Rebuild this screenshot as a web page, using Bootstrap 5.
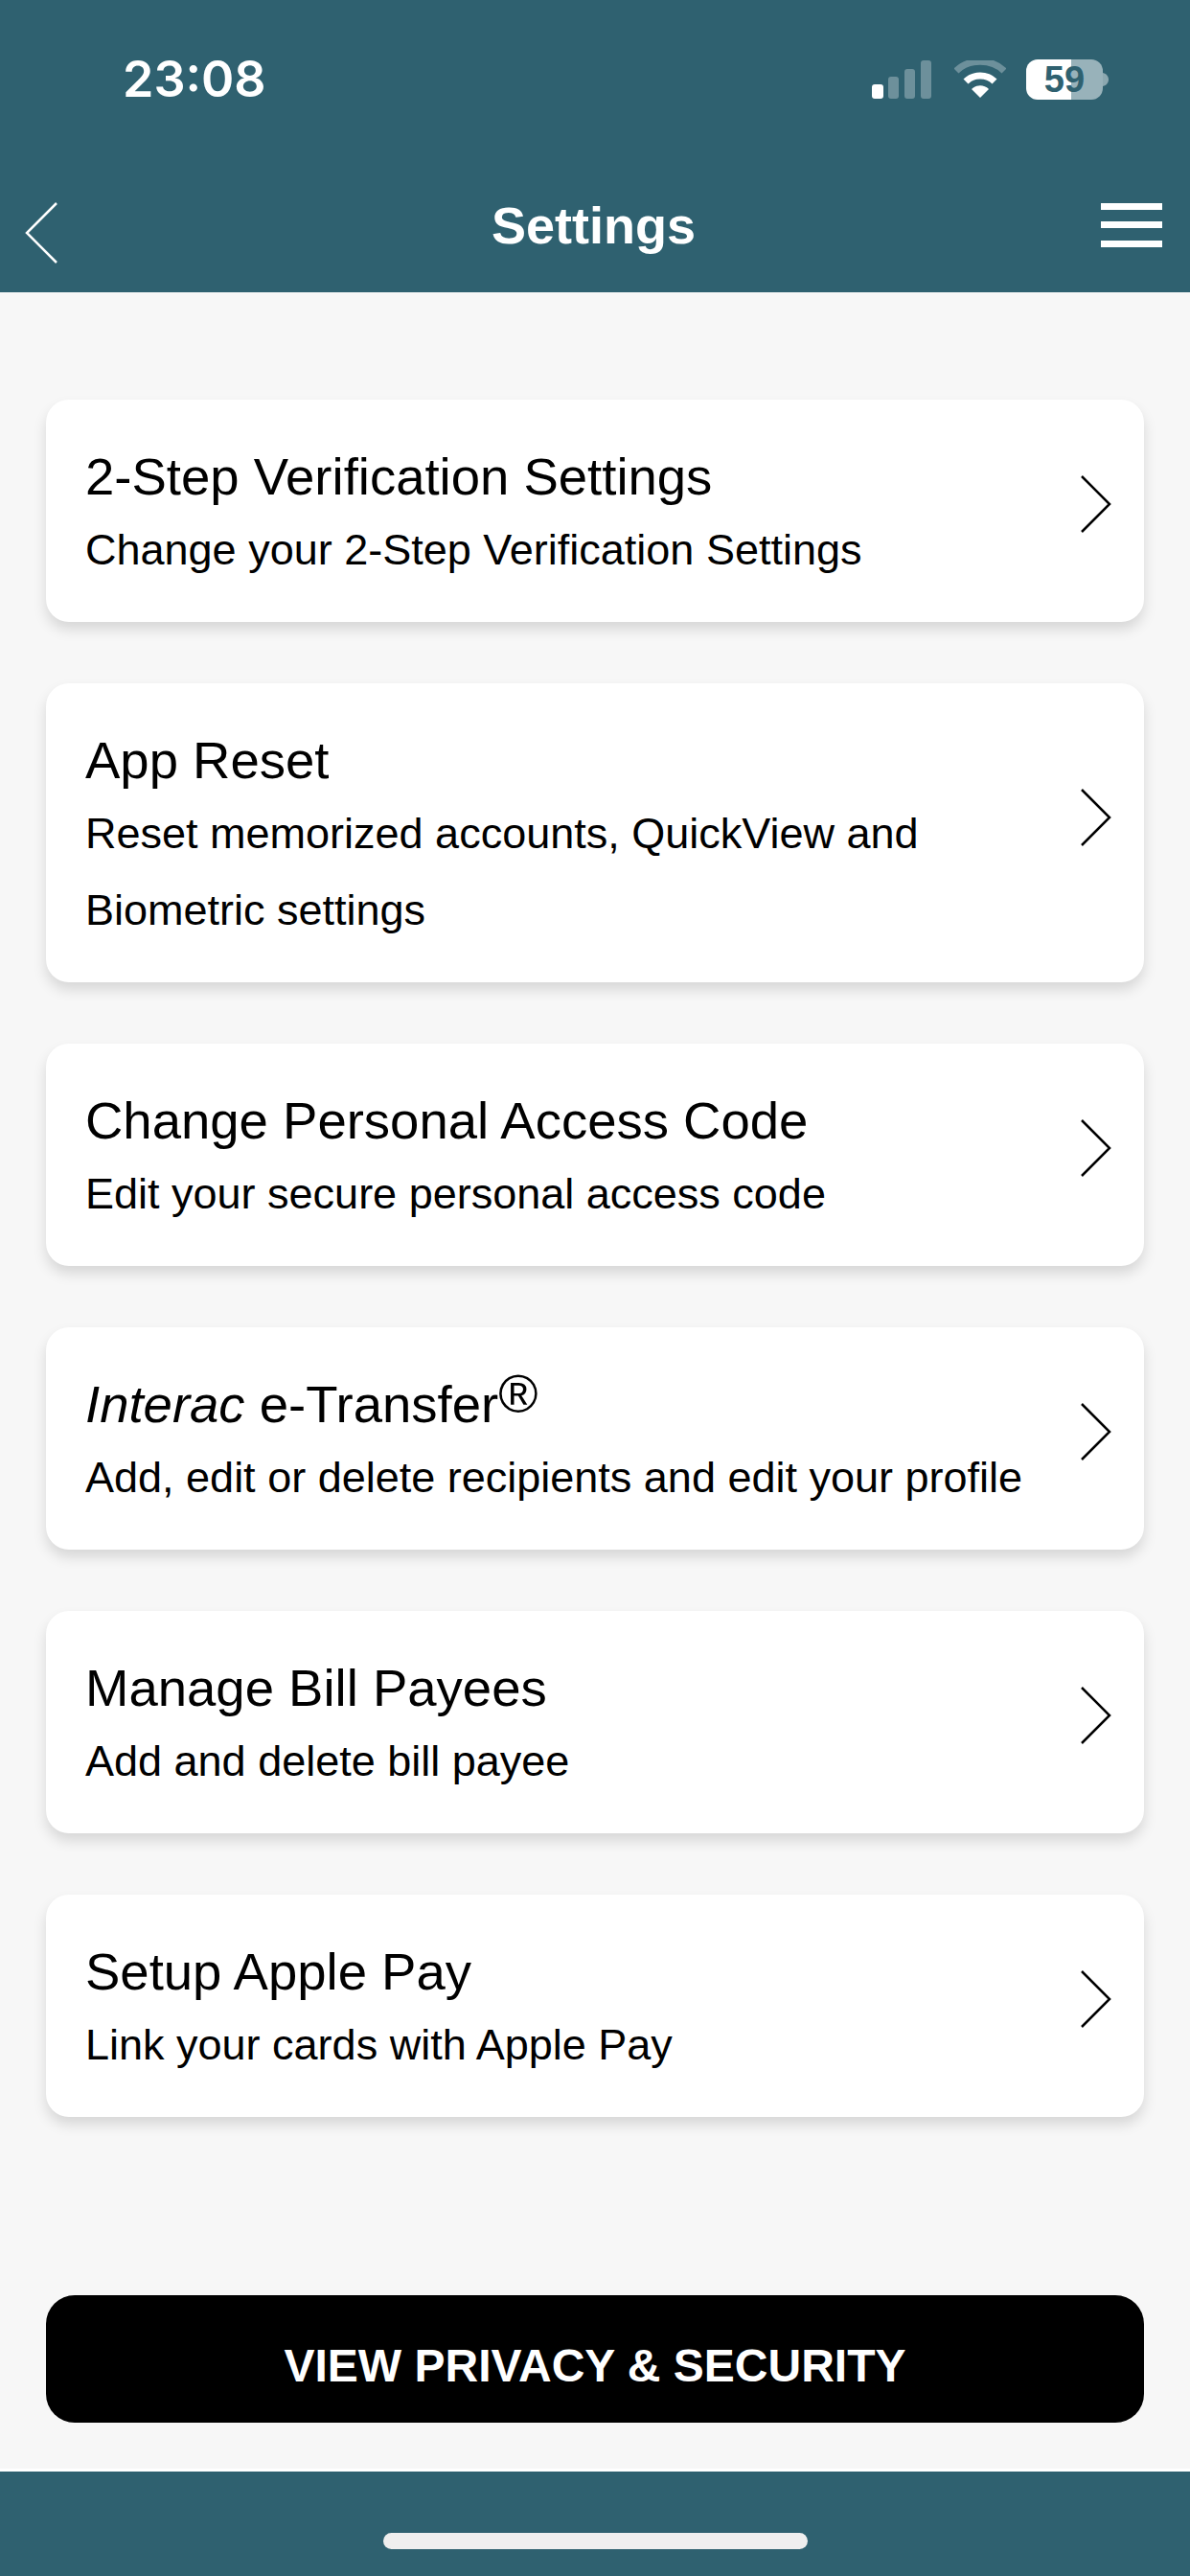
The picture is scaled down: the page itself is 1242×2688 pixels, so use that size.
<!DOCTYPE html>
<html lang="en">
<head>
    <meta charset="UTF-8">
    <title>Settings</title>
    <link href="https://cdn.jsdelivr.net/npm/bootstrap@5.3.3/dist/css/bootstrap.min.css" rel="stylesheet">
    <style>
        body { width: 1242px; height: 2688px; background: #f7f7f7; font-family: "Liberation Sans", Arial, sans-serif; color: #000; }
        .app-bar { height: 305px; background: #2f6170; color: #fff; }
        .status-row { height: 166px; padding: 0 84px 0 128px; }
        .clock { font-family: "Inter", "Liberation Sans", sans-serif; font-size: 52px; font-weight: 600; line-height: 1; }
        .signal-icon { margin-right: 24px; }
        .wifi-icon { margin-right: 21px; }
        .battery { width: 80px; height: 42px; border-radius: 12px; background: linear-gradient(90deg, #fff 0 47px, #98b2ba 47px); color: #2f6170; font-size: 38px; font-weight: 700; line-height: 42px; }
        .title-row { height: 139px; padding: 0 29px 0 26px; }
        .side-slot { flex: 1 1 0; }
        .back-icon { margin-top: 14px; display: block; }
        .page-title { font-size: 54px; font-weight: 700; margin: 0; }
        .menu-bars { width: 64px; margin-top: -2px; }
        .menu-bars span { display: block; height: 7px; background: #fff; margin-bottom: 12.5px; }
        .menu-bars span:last-child { margin-bottom: 0; }
        .settings-list { padding: 112px 48px 0; gap: 64px; }
        .setting-card { border: 0; border-radius: 24px; background: #fff; box-shadow: 0 8px 14px rgba(0,0,0,.13); padding: 53px 34px 35px 41px; }
        .setting-name { font-size: 54.5px; line-height: 56px; margin-bottom: 8px; font-weight: 400; }
        .setting-name sup { font-size: 56px; line-height: 0; top: -10px; vertical-align: baseline; }
        .setting-desc { font-size: 45px; line-height: 80px; margin: 0; }
        .arrow-wrap { margin-bottom: 32px; }
        .arrow-wrap.tall { margin-bottom: 50px; }
        .privacy-btn { margin: 186px 48px 0; width: 1146px; height: 134px; padding-top: 20px; border-radius: 30px; background: #000; color: #fff; border: 0; font-size: 48px; font-weight: 700; }
        .bottom-bar { height: 112px; margin-top: 48px; border-top: 3px solid #fff; background: #2f6170; padding-top: 64px; }
        .home-line { width: 443px; height: 17px; border-radius: 9px; background: #efefef; }
    </style>
</head>
<body class="d-flex flex-column">
    <header class="app-bar">
        <div class="status-row d-flex justify-content-between align-items-center">
            <span class="clock">23:08</span>
            <div class="d-flex align-items-center">
                <svg width="62" height="40" viewBox="0 0 62 40" class="signal-icon">
                    <rect x="0" y="25" width="12" height="15" rx="3" fill="#fff"/>
                    <rect x="17" y="17" width="11" height="23" rx="3" fill="#fff" opacity=".3"/>
                    <rect x="34" y="9" width="11" height="31" rx="3" fill="#fff" opacity=".3"/>
                    <rect x="51" y="0" width="11" height="40" rx="3" fill="#fff" opacity=".3"/>
                </svg>
                <svg width="54" height="40" viewBox="0 0 54 40" class="wifi-icon">
                    <path d="M2 11C15 -2 39 -2 52 11" fill="none" stroke="#fff" stroke-width="7" opacity=".3"/>
                    <path d="M12 22C20 14 34 14 42 22" fill="none" stroke="#fff" stroke-width="7"/>
                    <path d="M18 30C23 25 31 25 36 30L27 39Z" fill="#fff"/>
                </svg>
                <div class="battery text-center">59</div>
                <svg width="7" height="14" viewBox="0 0 7 14">
                    <path d="M0 0C4 1 6 4 6 7C6 10 4 13 0 14Z" fill="#fff" opacity=".45"/>
                </svg>
            </div>
        </div>
        <div class="title-row d-flex align-items-center">
            <div class="side-slot">
                <svg width="34" height="64" viewBox="0 0 34 64" class="back-icon">
                    <path d="M33 1L2 32L33 63" fill="none" stroke="#fff" stroke-width="2.5"/>
                </svg>
            </div>
            <h1 class="page-title">Settings</h1>
            <div class="side-slot d-flex justify-content-end">
                <div class="menu-bars"><span></span><span></span><span></span></div>
            </div>
        </div>
    </header>

    <main class="settings-list d-flex flex-column">
        <div class="card setting-card flex-row justify-content-between align-items-center">
            <div>
                <h2 class="setting-name">2-Step Verification Settings</h2>
                <p class="setting-desc">Change your 2-Step Verification Settings</p>
            </div>
            <div class="arrow-wrap"><svg width="32" height="60" viewBox="0 0 32 60"><path d="M1 1L30 30L1 59" fill="none" stroke="#000" stroke-width="2.5"/></svg></div>
        </div>
        <div class="card setting-card flex-row justify-content-between align-items-center">
            <div>
                <h2 class="setting-name">App Reset</h2>
                <p class="setting-desc">Reset memorized accounts, QuickView and<br>Biometric settings</p>
            </div>
            <div class="arrow-wrap tall"><svg width="32" height="60" viewBox="0 0 32 60"><path d="M1 1L30 30L1 59" fill="none" stroke="#000" stroke-width="2.5"/></svg></div>
        </div>
        <div class="card setting-card flex-row justify-content-between align-items-center">
            <div>
                <h2 class="setting-name">Change Personal Access Code</h2>
                <p class="setting-desc">Edit your secure personal access code</p>
            </div>
            <div class="arrow-wrap"><svg width="32" height="60" viewBox="0 0 32 60"><path d="M1 1L30 30L1 59" fill="none" stroke="#000" stroke-width="2.5"/></svg></div>
        </div>
        <div class="card setting-card flex-row justify-content-between align-items-center">
            <div>
                <h2 class="setting-name"><em>Interac</em> e-Transfer<sup>®</sup></h2>
                <p class="setting-desc">Add, edit or delete recipients and edit your profile</p>
            </div>
            <div class="arrow-wrap"><svg width="32" height="60" viewBox="0 0 32 60"><path d="M1 1L30 30L1 59" fill="none" stroke="#000" stroke-width="2.5"/></svg></div>
        </div>
        <div class="card setting-card flex-row justify-content-between align-items-center">
            <div>
                <h2 class="setting-name">Manage Bill Payees</h2>
                <p class="setting-desc">Add and delete bill payee</p>
            </div>
            <div class="arrow-wrap"><svg width="32" height="60" viewBox="0 0 32 60"><path d="M1 1L30 30L1 59" fill="none" stroke="#000" stroke-width="2.5"/></svg></div>
        </div>
        <div class="card setting-card flex-row justify-content-between align-items-center">
            <div>
                <h2 class="setting-name">Setup Apple Pay</h2>
                <p class="setting-desc">Link your cards with Apple Pay</p>
            </div>
            <div class="arrow-wrap"><svg width="32" height="60" viewBox="0 0 32 60"><path d="M1 1L30 30L1 59" fill="none" stroke="#000" stroke-width="2.5"/></svg></div>
        </div>
    </main>

    <button type="button" class="btn privacy-btn">VIEW PRIVACY &amp; SECURITY</button>

    <footer class="bottom-bar d-flex justify-content-center align-items-start">
        <div class="home-line"></div>
    </footer>

    <script src="https://cdn.jsdelivr.net/npm/bootstrap@5.3.3/dist/js/bootstrap.bundle.min.js"></script>
</body>
</html>
